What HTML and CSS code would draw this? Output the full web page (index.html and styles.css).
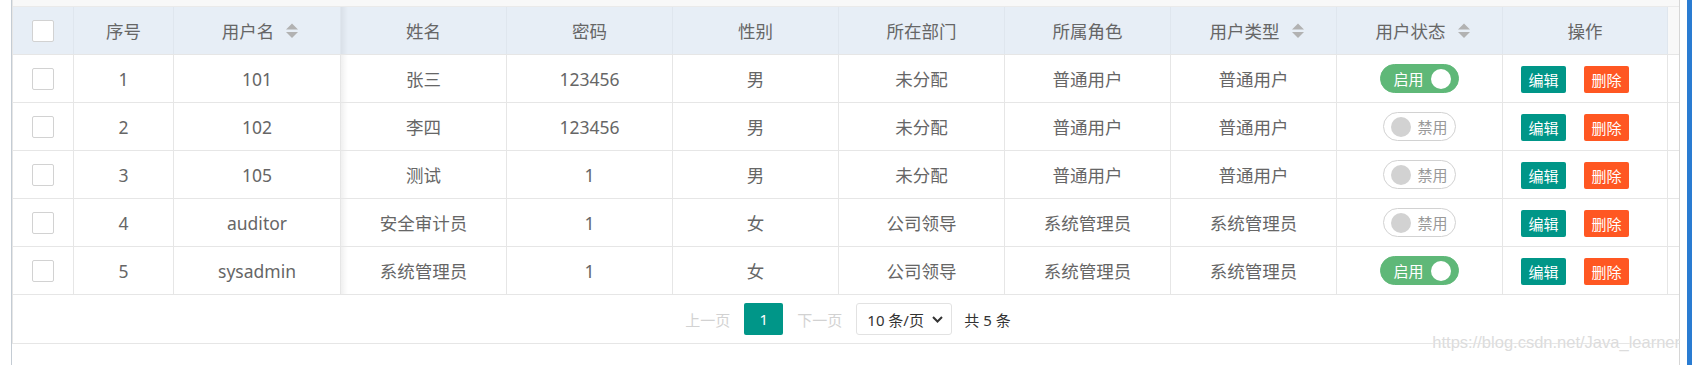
FILE: index.html
```html
<!DOCTYPE html>
<html lang="zh-CN">
<head>
    <meta charset="UTF-8">
    <meta name="viewport" content="width=device-width, initial-scale=1.0">
    <title>用户列表</title>
    <link rel="stylesheet" href="styles.css">
</head>
<body>
    <div class="page">
        <div class="gap-left"></div>
        <div class="panel">
            <div class="table-box">
                <div class="tool-strip"></div>

                <div class="row head">
                    <div class="cell"><span class="checkbox"></span></div>
                    <div class="cell">序号</div>
                    <div class="cell">用户名<svg class="sort" width="12" height="18" viewBox="0 0 12 18"><polygon points="6,7.5 18,7.5 12,1.5"/><polygon points="6,10 18,10 12,16"/></svg></div>
                    <div class="cell after-fixed">姓名</div>
                    <div class="cell">密码</div>
                    <div class="cell">性别</div>
                    <div class="cell">所在部门</div>
                    <div class="cell">所属角色</div>
                    <div class="cell">用户类型<svg class="sort" width="12" height="18" viewBox="0 0 12 18"><polygon points="6,7.5 18,7.5 12,1.5"/><polygon points="6,10 18,10 12,16"/></svg></div>
                    <div class="cell">用户状态<svg class="sort" width="12" height="18" viewBox="0 0 12 18"><polygon points="6,7.5 18,7.5 12,1.5"/><polygon points="6,10 18,10 12,16"/></svg></div>
                    <div class="cell">操作</div>
                    <div class="cell patch"></div>
                </div>

                <div class="row">
                    <div class="cell"><span class="checkbox"></span></div>
                    <div class="cell">1</div>
                    <div class="cell">101</div>
                    <div class="cell after-fixed">张三</div>
                    <div class="cell">123456</div>
                    <div class="cell">男</div>
                    <div class="cell">未分配</div>
                    <div class="cell">普通用户</div>
                    <div class="cell">普通用户</div>
                    <div class="cell"><span class="switch on"><em>启用</em><i></i></span></div>
                    <div class="cell ops"><span class="btn edit">编辑</span><span class="btn del">删除</span></div>
                    <div class="cell patch"></div>
                </div>

                <div class="row">
                    <div class="cell"><span class="checkbox"></span></div>
                    <div class="cell">2</div>
                    <div class="cell">102</div>
                    <div class="cell after-fixed">李四</div>
                    <div class="cell">123456</div>
                    <div class="cell">男</div>
                    <div class="cell">未分配</div>
                    <div class="cell">普通用户</div>
                    <div class="cell">普通用户</div>
                    <div class="cell"><span class="switch"><i></i><em>禁用</em></span></div>
                    <div class="cell ops"><span class="btn edit">编辑</span><span class="btn del">删除</span></div>
                    <div class="cell patch"></div>
                </div>

                <div class="row">
                    <div class="cell"><span class="checkbox"></span></div>
                    <div class="cell">3</div>
                    <div class="cell">105</div>
                    <div class="cell after-fixed">测试</div>
                    <div class="cell">1</div>
                    <div class="cell">男</div>
                    <div class="cell">未分配</div>
                    <div class="cell">普通用户</div>
                    <div class="cell">普通用户</div>
                    <div class="cell"><span class="switch"><i></i><em>禁用</em></span></div>
                    <div class="cell ops"><span class="btn edit">编辑</span><span class="btn del">删除</span></div>
                    <div class="cell patch"></div>
                </div>

                <div class="row">
                    <div class="cell"><span class="checkbox"></span></div>
                    <div class="cell">4</div>
                    <div class="cell">auditor</div>
                    <div class="cell after-fixed">安全审计员</div>
                    <div class="cell">1</div>
                    <div class="cell">女</div>
                    <div class="cell">公司领导</div>
                    <div class="cell">系统管理员</div>
                    <div class="cell">系统管理员</div>
                    <div class="cell"><span class="switch"><i></i><em>禁用</em></span></div>
                    <div class="cell ops"><span class="btn edit">编辑</span><span class="btn del">删除</span></div>
                    <div class="cell patch"></div>
                </div>

                <div class="row">
                    <div class="cell"><span class="checkbox"></span></div>
                    <div class="cell">5</div>
                    <div class="cell">sysadmin</div>
                    <div class="cell after-fixed">系统管理员</div>
                    <div class="cell">1</div>
                    <div class="cell">女</div>
                    <div class="cell">公司领导</div>
                    <div class="cell">系统管理员</div>
                    <div class="cell">系统管理员</div>
                    <div class="cell"><span class="switch on"><em>启用</em><i></i></span></div>
                    <div class="cell ops"><span class="btn edit">编辑</span><span class="btn del">删除</span></div>
                    <div class="cell patch"></div>
                </div>

                <div class="pager">
                    <span class="page-link disabled">上一页</span>
                    <span class="page-num">1</span>
                    <span class="page-link disabled">下一页</span>
                    <span class="limit">10 条/页<svg width="11" height="7" viewBox="0 0 11 7"><polyline points="1,1 5.5,5.5 10,1" fill="none" stroke="#333" stroke-width="2"/></svg></span>
                    <span class="count">共 5 条</span>
                </div>
            </div>
            <div class="watermark">https://blog.csdn.net/Java_learner</div>
        </div>
        <div class="gap-right"></div>
        <div class="blue-bar"></div>
    </div>
</body>
</html>
```

FILE: styles.css
```css
* {
    box-sizing: border-box;
}
body {
    margin: 0;
    background: #fff;
    font-family: "Noto Sans", "Noto Sans CJK SC", sans-serif;
    color: #666;
}
.page {
    display: flex;
    height: 365px;
    overflow: hidden;
}
.gap-left {
    width: 11px;
}
.panel {
    width: 1669px;
    border-left: 1px solid #c4ccd4;
    border-right: 1px solid #d6d6d6;
    position: relative; /* para la marca de agua */
}
.gap-right {
    width: 7px;
}
.blue-bar {
    width: 5px;
    background: #2a7cd2;
}
.table-box {
    border-left: 1px solid #e6e6e6;
    border-bottom: 1px solid #e6e6e6;
}
.tool-strip {
    height: 6px;
    background: #f8f8f8;
}

/* filas */
.row {
    display: grid;
    grid-template-columns: 61px 100px 167px repeat(7, 166px) 165px 11px;
    height: 48px;
    border-bottom: 1px solid #e6e6e6;
    font-size: 17.5px;
}
.row.head {
    height: 49px;
    background: #e7eef6;
    border-top: 1px solid #eaeaea;
}
.cell {
    display: flex;
    align-items: center;
    justify-content: center;
    border-right: 1px solid #e6e6e6;
    white-space: nowrap;
}
.head .cell {
    border-right-color: #dfe6ee;
}
.head .patch {
    background: #f8f8f8;
    border-right: none;
}
.row .patch {
    border-right: none;
}
.after-fixed {
    background-image: linear-gradient(to right, rgba(0, 0, 0, 0.06), rgba(0, 0, 0, 0) 7px);
}
.sort {
    margin-left: 6px;
    overflow: visible;
    fill: #b2b2b2;
}
.checkbox {
    width: 22px;
    height: 22px;
    border: 1px solid #d2d2d2;
    border-radius: 2px;
    background: #fff;
}

/* interruptor */
.switch {
    display: flex;
    align-items: center;
    height: 29px;
    border: 1px solid #d2d2d2;
    border-radius: 20px;
    background: #fff;
    font-size: 15px;
    padding: 0 7px;
    gap: 6px;
}
.switch i {
    width: 20px;
    height: 20px;
    border-radius: 50%;
    background: #d2d2d2;
}
.switch em {
    font-style: normal;
    color: #999;
}
.switch.on {
    background: #5fb878;
    border-color: #5fb878;
    padding: 0 7px 0 12px;
    gap: 7px;
}
.switch.on i {
    background: #fff;
}
.switch.on em {
    color: #fff;
}

/* botones */
.ops {
    gap: 18px;
    padding-right: 20px;
}
.btn {
    display: inline-flex;
    align-items: center;
    justify-content: center;
    width: 45px;
    height: 27px;
    margin-top: 2px;
    border-radius: 2px;
    color: #fff;
    font-size: 15px;
}
.edit {
    background: #009688;
}
.del {
    background: #ff5722;
}

/* paginacion */
.pager {
    display: flex;
    align-items: center;
    justify-content: center;
    height: 48px;
    padding-left: 4px;
    gap: 14px;
    font-size: 15px;
    color: #333;
}
.page-link.disabled {
    color: #d2d2d2;
}
.page-num {
    display: inline-flex;
    align-items: center;
    justify-content: center;
    width: 39px;
    height: 32px;
    background: #009688;
    color: #fff;
    border-radius: 2px;
}
.limit {
    display: inline-flex;
    align-items: center;
    justify-content: space-between;
    width: 96px;
    height: 32px;
    padding: 0 8px 0 10px;
    border: 1px solid #e2e2e2;
    border-radius: 3px;
    margin-right: -2px;
}
.watermark {
    position: absolute;
    right: -1px;
    top: 333px;
    font-family: "Liberation Sans", Arial, sans-serif;
    font-size: 16.5px;
    color: #dcdcdc;
    text-shadow: 0 0 1px #fff;
}
```
